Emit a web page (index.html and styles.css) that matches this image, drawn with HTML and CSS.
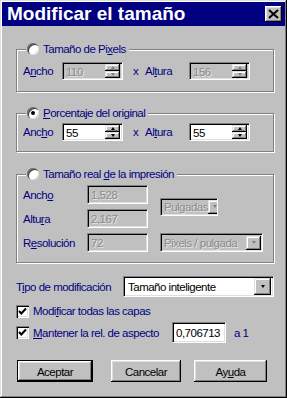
FILE: index.html
```html
<!DOCTYPE html>
<html lang="es">
<head>
<meta charset="utf-8">
<title>Modificar el tamaño</title>
<link rel="stylesheet" href="styles.css">
</head>
<body>
<div class="window">
  <div class="titlebar">
    <span class="title">Modificar el tamaño</span>
    <span class="close"><svg width="11" height="10" viewBox="0 0 11 10"><path d="M1 1 L10 9 M10 1 L1 9" stroke="#000" stroke-width="2" fill="none"/></svg></span>
  </div>
  <div class="body">
    <fieldset class="group g1">
      <legend class="legend"><span class="legend-in"><span class="radio"></span><span>Tamaño de Pi<u>x</u>els</span></span></legend>
      <div class="row">
        <span class="lbl w39">A<u>n</u>cho</span>
        <span class="field disabled"><span class="val">110</span><span class="spinbtns"><span class="sb"><i class="up"></i></span><span class="sb"><i class="down"></i></span></span></span>
        <span class="times">x</span>
        <span class="lbl w44">Al<u>t</u>ura</span>
        <span class="field disabled"><span class="val">156</span><span class="spinbtns"><span class="sb"><i class="up"></i></span><span class="sb"><i class="down"></i></span></span></span>
      </div>
    </fieldset>

    <fieldset class="group g2">
      <legend class="legend"><span class="legend-in"><span class="radio checked"></span><span><u>P</u>orcentaje del original</span></span></legend>
      <div class="row">
        <span class="lbl w39">Anc<u>h</u>o</span>
        <span class="field"><span class="val">55</span><span class="spinbtns"><span class="sb"><i class="up"></i></span><span class="sb"><i class="down"></i></span></span></span>
        <span class="times">x</span>
        <span class="lbl w44">Al<u>t</u>ura</span>
        <span class="field"><span class="val">55</span><span class="spinbtns"><span class="sb"><i class="up"></i></span><span class="sb"><i class="down"></i></span></span></span>
      </div>
    </fieldset>

    <fieldset class="group g3">
      <legend class="legend"><span class="legend-in"><span class="radio"></span><span>Tamaño real <u>d</u>e la impresión</span></span></legend>
      <div class="grid3">
        <span class="drop drop-a disabled"><span class="val">Pulgadas</span><span class="dbtn"><i class="down"></i></span></span>
        <span class="lbl">Anch<u>o</u></span>
        <span class="field disabled tall"><span class="val">1,528</span></span>
        <span class="lbl">Altu<u>r</u>a</span>
        <span class="field disabled tall"><span class="val">2,167</span></span>
        <span class="lbl">R<u>e</u>solución</span>
        <span class="field disabled tall"><span class="val">72</span></span>
        <span class="drop drop-b disabled"><span class="val">Pixels / pulgada</span><span class="dbtn"><i class="down"></i></span></span>
      </div>
    </fieldset>

    <div class="tipo">
      <span class="lbl">T<u>i</u>po de modificación</span>
      <span class="combo"><span class="val">Tamaño inteligente</span><span class="dbtn big"><i class="down"></i></span></span>
    </div>

    <div class="check-row r1">
      <span class="cbox"><svg width="9" height="9" viewBox="0 0 9 9"><path d="M1 4 L3.3 6.5 L8 1.5" stroke="#000" stroke-width="2" fill="none"/></svg></span>
      <span class="lbl">Modi<u>f</u>icar todas las capas</span>
    </div>

    <div class="check-row r2">
      <span class="cbox"><svg width="9" height="9" viewBox="0 0 9 9"><path d="M1 4 L3.3 6.5 L8 1.5" stroke="#000" stroke-width="2" fill="none"/></svg></span>
      <span class="lbl wratio"><u>M</u>antener la rel. de aspecto</span>
      <span class="field ratio"><span class="val dark">0,706713</span></span>
      <span class="lbl a1">a 1</span>
    </div>

    <div class="buttons">
      <span class="btn default b-ok"><span class="btn-in">Aceptar</span></span>
      <span class="btn b-cancel"><span class="btn-in">Cancelar</span></span>
      <span class="btn b-help"><span class="btn-in">Ay<u>u</u>da</span></span>
    </div>
  </div>
</div>
</body>
</html>
```

FILE: styles.css
```css
* { box-sizing: border-box; }
html, body { margin: 0; padding: 0; }
body {
  background: #c0c0c0;
  font-family: "Liberation Sans", Arial, sans-serif;
  font-size: 11.5px;
  letter-spacing: -0.5px;
}
.window {
  width: 287px;
  height: 398px;
  background: #c0c0c0;
  padding: 2px;
  box-shadow: inset -1px -1px #000, inset 1px 1px #dfdfdf, inset -2px -2px #808080, inset 2px 2px #fff;
  display: flex;
  flex-direction: column;
}
.titlebar {
  height: 24px;
  background: #000080;
  display: flex;
  align-items: center;
  justify-content: space-between;
  padding: 0 3px 0 5px;
}
.title {
  color: #fff;
  font-weight: bold;
  font-size: 19px;
  letter-spacing: 0;
}
.close {
  width: 17px;
  height: 16px;
  background: #c0c0c0;
  box-shadow: inset -1px -1px #000, inset 1px 1px #fff, inset -2px -2px #808080, inset 2px 2px #dfdfdf;
  display: flex;
  align-items: center;
  justify-content: center;
}
.body {
  padding: 16px 11px 0 14px;
  display: flex;
  flex-direction: column;
}
.lbl { color: #000080; white-space: nowrap; }
u { text-decoration: underline; text-underline-offset: 1px; }

.group {
  margin: 0;
  min-width: 0;
  border: 1px solid #808080;
  box-shadow: inset 1px 1px #fff, 1px 1px #fff;
  padding: 6px 6px 11px 6px;
}
.g2 { margin-top: 14px; padding-top: 3px; padding-bottom: 10px; }
.g3 { margin-top: 15px; padding-top: 4px; padding-bottom: 10px; }
.legend {
  padding: 0 3px 0 1px;
  margin-left: 3px;
  background: #c0c0c0;
  color: #000080;
}
.legend-in {
  display: flex;
  align-items: center;
  gap: 4px;
  height: 14px;
}
.radio {
  width: 12px;
  height: 12px;
  border-radius: 50%;
  background: #fff;
  box-shadow: inset 1px 1px #808080, inset 2px 2px #404040, inset -1px -1px #dfdfdf;
  display: flex;
  align-items: center;
  justify-content: center;
}
.radio.checked::after {
  content: "";
  width: 4px;
  height: 4px;
  border-radius: 50%;
  background: #000;
}

.row { display: flex; align-items: center; height: 18px; }
.w39 { width: 39px; }
.w44 { width: 44px; }
.times { width: 12px; margin-left: 10px; color: #000080; }

.field, .drop, .combo {
  height: 18px;
  width: 61px;
  background: #fff;
  border: 1px solid;
  border-color: #808080 #fff #fff #808080;
  box-shadow: inset 1px 1px #000, inset -1px -1px #dfdfdf;
  display: flex;
  align-items: center;
  padding: 0 2px 0 3px;
  color: #000;
  white-space: nowrap;
  overflow: hidden;
}
.field.tall { height: 19px; }
.disabled { background: #c0c0c0; }
.disabled .val { color: #8c8c8c; text-shadow: 1px 1px #e4e4e4; }
.val { padding-top: 1px; }

.spinbtns {
  margin-left: auto;
  width: 15px;
  height: 14px;
  display: flex;
  flex-direction: column;
}
.sb, .dbtn {
  flex: 1;
  background: #c0c0c0;
  box-shadow: inset -1px -1px #000, inset 1px 1px #dfdfdf, inset -2px -2px #808080, inset 2px 2px #fff;
  display: flex;
  align-items: center;
  justify-content: center;
}
i.up, i.down { display: block; width: 0; height: 0; border-left: 2.5px solid transparent; border-right: 2.5px solid transparent; }
i.up { border-bottom: 3px solid #000; }
i.down { border-top: 3px solid #000; }
.disabled i.up { border-bottom-color: #808080; }
.disabled i.down { border-top-color: #808080; }

.grid3 {
  display: grid;
  grid-template-columns: 64px 61px auto;
  grid-template-rows: 19px 19px 19px;
  row-gap: 5px;
  align-items: center;
}
.drop { margin-left: 12px; }
.drop-a { grid-column: 3; grid-row: 1 / span 2; width: 58px; height: 18px; }
.drop-b { grid-column: 3; grid-row: 3; width: 103px; height: 19px; }
.dbtn { flex: none; margin-left: auto; width: 15px; height: 14px; }
.drop .dbtn { margin-right: -1px; }

.tipo {
  display: flex;
  align-items: center;
  justify-content: space-between;
  margin-top: 13px;
}
.combo { width: 151px; height: 21px; padding-left: 4px; }
.dbtn.big { width: 17px; height: 17px; }

.check-row { display: flex; align-items: center; gap: 4px; }
.r1 { height: 16px; margin-top: 6px; }
.r2 { height: 21px; margin-top: 3px; }
.cbox {
  width: 13px;
  height: 13px;
  flex: none;
  background: #fff;
  box-shadow: inset 1px 1px #808080, inset 2px 2px #000, inset -1px -1px #fff, inset -2px -2px #dfdfdf;
  display: flex;
  align-items: center;
  justify-content: center;
}
.wratio { width: 135px; }
.field.ratio { width: 54px; height: 21px; }
.a1 { margin-left: 4px; }

.buttons { display: flex; margin-top: 17px; padding-left: 1px; }
.btn {
  height: 22px;
  background: #c0c0c0;
  box-shadow: inset -1px -1px #000, inset 1px 1px #fff, inset -2px -2px #808080, inset 2px 2px #dfdfdf;
  display: flex;
  align-items: center;
  justify-content: center;
  color: #000;
}
.btn.default { border: 1px solid #000; }
.btn-in { padding-top: 1px; }
.b-ok { width: 76px; }
.b-cancel { width: 70px; margin-left: 18px; }
.b-help { width: 73px; margin-left: 13px; }
```
